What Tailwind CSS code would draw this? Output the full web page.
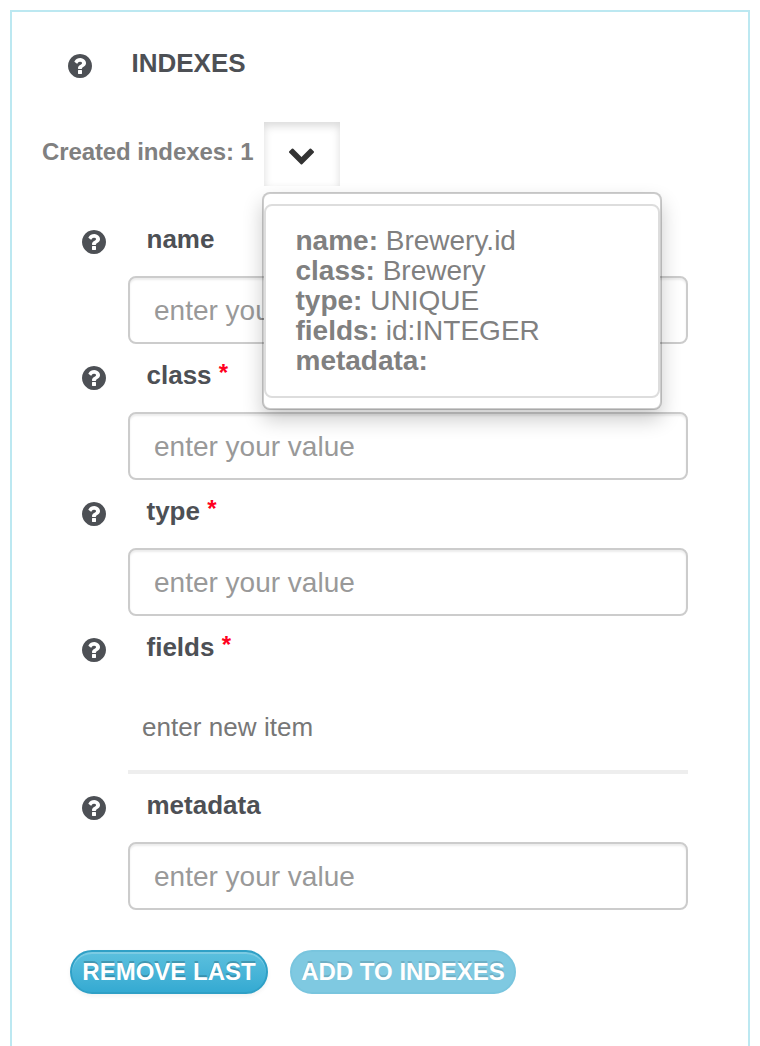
<!DOCTYPE html>
<html lang="en">
<head>
<meta charset="utf-8">
<title>Indexes</title>
<script src="https://cdn.jsdelivr.net/npm/@tailwindcss/browser@4"></script>
</head>
<body class="bg-white h-[1046px] overflow-hidden px-[10px] pt-[10px] font-['Liberation_Sans',Arial,sans-serif] text-[#4d5055]">
<svg class="hidden">
  <symbol id="help" viewBox="128 128 1536 1536"><path fill="currentColor" d="M1024 1376v-192q0-14-9-23t-23-9h-192q-14 0-23 9t-9 23v192q0 14 9 23t23 9h192q14 0 23-9t9-23zm256-672q0-88-55.500-163t-138.500-116-170-41q-243 0-371 213-15 24 8 42l132 100q7 6 19 6 16 0 25-12 53-68 86-92 34-24 86-24 48 0 85.500 26t37.500 59q0 38-20 61t-68 45q-63 28-115.500 86.500t-52.500 125.500v36q0 14 9 23t23 9h192q14 0 23-9t9-23q0-19 21.500-49.500t54.500-49.500q32-18 49-28.500t46-35 44.500-48 28-60.500 12.500-81zm384 192q0 209-103 385.500t-279.500 279.500-385.500 103-385.500-103-279.500-279.500-103-385.500 103-385.500 279.500-279.500 385.500-103 385.500 103 279.500 279.500 103 385.500z"/></symbol>
</svg>
<main class="h-[1060px] border-2 border-[#bce8f1] flex flex-col">
  <header class="flex items-start h-[110px] pl-[55.5px] pt-[36px]">
    <svg class="w-[24px] h-[24px] mt-[6px]"><use href="#help"/></svg>
    <h1 class="ml-[40px] text-[26px] leading-[30px] font-bold">INDEXES</h1>
  </header>
  <div class="flex items-start h-[86px] pl-[30px] text-[#808080]">
    <span class="w-[222px] pt-[16px] text-[24px] leading-[28px] tracking-[-0.1px] font-bold whitespace-nowrap">Created indexes: 1</span>
    <div class="relative">
      <button class="flex w-[76px] h-[64px] items-center justify-center bg-white shadow-[inset_0_4px_8px_rgba(0,0,0,0.15)] text-[#333]">
        <svg class="w-[25px] h-[17px] mt-[4px] mr-px" viewBox="90 533 1612 1035"><path fill="currentColor" d="M1683 808l-742 741q-19 19-45 19t-45-19l-742-741q-19-19-19-45.500t19-45.500l166-165q19-19 45-19t45 19l531 531 531-531q19-19 45-19t45 19l166 165q19 19 19 45.500t-19 45.500z"/></svg>
      </button>
      <div class="absolute z-10 left-[-2px] top-[70px] w-[400px] h-[218px] py-[10px] rounded-[8px] border-2 border-black/20 bg-white bg-clip-padding shadow-[0_10px_20px_rgba(0,0,0,0.2)]">
        <div class="h-[194px] border-2 border-[#ddd] rounded-[8px] bg-white pl-[29.5px] pt-[20px] text-[28px] leading-[30px] whitespace-nowrap">
          <p><b>name:</b> Brewery.id</p>
          <p><b>class:</b> Brewery</p>
          <p><b>type:</b> UNIQUE</p>
          <p><b>fields:</b> id:INTEGER</p>
          <p><b>metadata:</b></p>
        </div>
      </div>
    </div>
  </div>
  <form class="flex flex-col pl-[70px] pr-[60px]">
    <div class="h-[136px]">
      <div class="flex h-[68px] pt-[16px] items-start"><svg class="w-[24px] h-[24px] mt-[6px]"><use href="#help"/></svg><label class="ml-[40.5px] text-[26px] leading-[30px] font-bold">name</label></div>
      <input class="block ml-[46px] w-[560px] h-[68px] rounded-[8px] border-2 border-[#ccc] bg-white pt-[1px] px-[24px] text-[28px] placeholder:text-[#999] shadow-[inset_0_2px_2px_rgba(0,0,0,0.075)]" placeholder="enter your value">
    </div>
    <div class="h-[136px]">
      <div class="flex h-[68px] pt-[16px] items-start"><svg class="w-[24px] h-[24px] mt-[6px]"><use href="#help"/></svg><label class="ml-[40.5px] text-[26px] leading-[30px] font-bold">class <span class="inline-block -translate-y-[3px] text-[24px] leading-none text-[#ff0020]">*</span></label></div>
      <input class="block ml-[46px] w-[560px] h-[68px] rounded-[8px] border-2 border-[#ccc] bg-white pt-[1px] px-[24px] text-[28px] placeholder:text-[#999] shadow-[inset_0_2px_2px_rgba(0,0,0,0.075)]" placeholder="enter your value">
    </div>
    <div class="h-[136px]">
      <div class="flex h-[68px] pt-[16px] items-start"><svg class="w-[24px] h-[24px] mt-[6px]"><use href="#help"/></svg><label class="ml-[40.5px] text-[26px] leading-[30px] font-bold">type <span class="inline-block -translate-y-[3px] text-[24px] leading-none text-[#ff0020]">*</span></label></div>
      <input class="block ml-[46px] w-[560px] h-[68px] rounded-[8px] border-2 border-[#ccc] bg-white pt-[1px] px-[24px] text-[28px] placeholder:text-[#999] shadow-[inset_0_2px_2px_rgba(0,0,0,0.075)]" placeholder="enter your value">
    </div>
    <div class="h-[158px]">
      <div class="flex h-[68px] pt-[16px] items-start"><svg class="w-[24px] h-[24px] mt-[6px]"><use href="#help"/></svg><label class="ml-[40.5px] text-[26px] leading-[30px] font-bold">fields <span class="inline-block -translate-y-[3px] text-[24px] leading-none text-[#ff0020]">*</span></label></div>
      <div class="ml-[46px] w-[560px] h-[90px] border-b-4 border-[#eee] pl-[14px] pt-[28px] text-[26px] leading-[30px] tracking-[0.05px] text-[#777]">enter new item</div>
    </div>
    <div class="h-[136px]">
      <div class="flex h-[68px] pt-[16px] items-start"><svg class="w-[24px] h-[24px] mt-[6px]"><use href="#help"/></svg><label class="ml-[40.5px] text-[26px] leading-[30px] font-bold">metadata</label></div>
      <input class="block ml-[46px] w-[560px] h-[68px] rounded-[8px] border-2 border-[#ccc] bg-white pt-[1px] px-[24px] text-[28px] placeholder:text-[#999] shadow-[inset_0_2px_2px_rgba(0,0,0,0.075)]" placeholder="enter your value">
    </div>
  </form>
  <div class="flex gap-[22px] pl-[58px] pt-[40px] text-[24px] leading-[28px] font-bold text-white whitespace-nowrap">
    <button class="w-[198px] h-[44px] pb-px rounded-full border-2 border-[#2fa0c6] bg-linear-to-b from-[#5bc0de] to-[#34aad2] shadow-[inset_0_2px_0_rgba(255,255,255,0.2),0_2px_4px_rgba(0,0,0,0.05)] [text-shadow:0_-2px_0_rgba(0,0,0,0.2)]">REMOVE LAST</button>
    <button class="w-[226px] h-[44px] pb-px rounded-full border-2 border-[#79c5de] bg-[#7fc9e1] [text-shadow:0_-2px_0_rgba(0,0,0,0.12)]">ADD TO INDEXES</button>
  </div>
</main>
</body>
</html>
